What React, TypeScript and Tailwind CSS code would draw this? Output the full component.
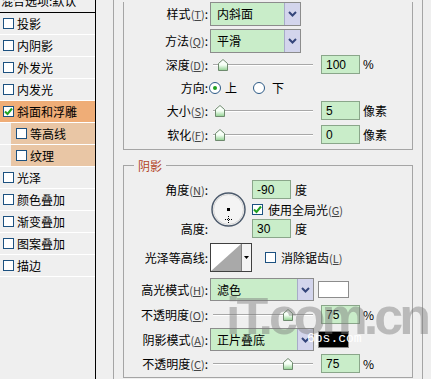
import React from "react";

const font = { fontFamily: '"Noto Sans CJK SC", "Liberation Sans", sans-serif' };

const layers = [
  { t: "投影" },
  { t: "内阴影" },
  { t: "外发光" },
  { t: "内发光" },
  { t: "斜面和浮雕", on: true, checked: true },
  { t: "等高线", sub: true },
  { t: "纹理", sub: true },
  { t: "光泽" },
  { t: "颜色叠加" },
  { t: "渐变叠加" },
  { t: "图案叠加" },
  { t: "描边" },
];

function Box({ checked }: { checked?: boolean }) {
  return (
    <div className="flex h-[11px] w-[11px] shrink-0 items-center justify-center border border-[#1c5180] bg-white">
      {checked && (
        <svg width="9" height="9" viewBox="0 0 9 9">
          <path d="M1 4.5 L3.5 7 L8 1.5" fill="none" stroke="#21a121" strokeWidth="2" />
        </svg>
      )}
    </div>
  );
}

function Lbl({ t, k, w = "w-[84px]" }: { t: string; k?: string; w?: string }) {
  return (
    <div className={`${w} shrink-0 text-right`}>
      {t}
      {k && (
        <span className="text-[11px] text-[#444]">
          (<span className="underline">{k}</span>)
        </span>
      )}
      :
    </div>
  );
}

function Slider({ pos }: { pos: number }) {
  return (
    <div className="relative ml-[3px] h-[14px] w-[100px] shrink-0">
      <div className="absolute left-0 right-0 top-[6px] h-[2px] border-t border-b border-t-[#a8a8a8] border-b-white" />
      <svg className="absolute top-[1px]" style={{ left: pos - 5 }} width="10" height="12" viewBox="0 0 10 12">
        <defs>
          <linearGradient id="thumb" x1="0" y1="0" x2="0" y2="1">
            <stop offset="0" stopColor="#ffffff" />
            <stop offset="0.5" stopColor="#f4fff4" />
            <stop offset="1" stopColor="#8fd08f" />
          </linearGradient>
        </defs>
        <path d="M0.5 11.5 V4.5 L5 0.5 L9.5 4.5 V11.5 Z" fill="url(#thumb)" stroke="#6e8a6e" />
      </svg>
    </div>
  );
}

function Num({ v, cls = "ml-[8px]" }: { v: string; cls?: string }) {
  return (
    <div
      className={`${cls} flex h-[19px] w-[39px] shrink-0 items-center border border-[#8aa68a] bg-[#c9edc9] pl-[4px] text-[12px]`}
      style={{ fontFamily: '"Liberation Sans", sans-serif' }}
    >
      {v}
    </div>
  );
}

function Sel({ t, cls }: { t: string; cls: string }) {
  return (
    <div className={`${cls} ml-[2px] flex shrink-0 border border-[#8c8c8c] bg-[#c9edc9]`}>
      <div className="flex flex-1 items-center pl-[6px]">{t}</div>
      <div className="flex w-[16px] items-center justify-center border-l border-[#a7abc8] bg-[#d3d5ec]">
        <svg width="9" height="6" viewBox="0 0 9 6">
          <path d="M1 1 L4.5 4.5 L8 1" fill="none" stroke="#34457a" strokeWidth="2" />
        </svg>
      </div>
    </div>
  );
}

function Radio({ on }: { on?: boolean }) {
  return (
    <div className="flex h-[12px] w-[12px] shrink-0 items-center justify-center rounded-full border border-[#2c5a86] bg-white">
      {on && <div className="h-[4px] w-[4px] rounded-full bg-[#21a121]" />}
    </div>
  );
}

export default function App() {
  return (
    <div
      className="relative flex h-[379px] w-[431px] overflow-hidden bg-[#efefef] text-[12px] leading-none text-black"
      style={font}
    >
      {/* layer list */}
      <div className="w-[96px] shrink-0 border-r border-black">
        <div className="h-[13px] overflow-hidden border-b border-black">
          <div className="-mt-[7px] whitespace-nowrap pl-[1px] leading-[16px]">混合选项:默认</div>
        </div>
        {layers.map((l) => (
          <div key={l.t} className="h-[22px] border-b border-white">
            <div
              className={`flex h-full items-center gap-[3px] ${
                l.sub ? "ml-[11px] bg-[#e9c6a5] pl-[5px]" : l.on ? "bg-[#efad77] pl-[3px]" : "pl-[3px]"
              }`}
            >
              <Box checked={l.checked} />
              <span>{l.t}</span>
            </div>
          </div>
        ))}
      </div>

      {/* outer group */}
      <div className="ml-[17px] h-full w-[310px] shrink-0 border-l border-r border-[#a5a5a5] px-[9px]">
        {/* structure */}
        <div className="border-b border-l border-r border-[#a5a5a5] pb-[5px]">
          <div className="mt-[2px] flex h-[24px] items-center">
            <Lbl t="样式" k="T" />
            <Sel t="内斜面" cls="h-[24px] w-[91px]" />
          </div>
          <div className="mt-[3px] flex h-[24px] items-center">
            <Lbl t="方法" k="Q" />
            <Sel t="平滑" cls="h-[24px] w-[91px]" />
          </div>
          <div className="mt-[2px] flex h-[19px] items-center">
            <Lbl t="深度" k="D" />
            <div className="w-[2px]" />
            <Slider pos={10} />
            <Num v="100" />
            <span className="ml-[3px]" style={{ fontFamily: '"Liberation Sans", sans-serif' }}>%</span>
          </div>
          <div className="mt-[5px] flex h-[18px] items-center">
            <Lbl t="方向" />
            <div className="ml-[1px]">
              <Radio on />
            </div>
            <span className="ml-[4px]">上</span>
            <div className="ml-[16px]">
              <Radio />
            </div>
            <span className="ml-[7px]">下</span>
          </div>
          <div className="mt-[4px] flex h-[19px] items-center">
            <Lbl t="大小" k="S" />
            <div className="w-[2px]" />
            <Slider pos={7} />
            <Num v="5" />
            <span className="ml-[3px]">像素</span>
          </div>
          <div className="mt-[5px] flex h-[19px] items-center">
            <Lbl t="软化" k="F" />
            <div className="w-[2px]" />
            <Slider pos={7} />
            <Num v="0" />
            <span className="ml-[3px]">像素</span>
          </div>
        </div>

        {/* shadow */}
        <div className="relative mt-[15px] border border-[#a5a5a5] pb-[4px]">
          <div className="absolute -top-[8px] left-[10px] bg-[#efefef] px-[4px] leading-[16px] text-[#b3462a]">阴影</div>
          <div className="mt-[14px] flex">
            <div className="flex w-[84px] flex-col">
              <div className="flex h-[19px] items-center justify-end">
                <Lbl t="角度" k="N" />
              </div>
              <div className="h-[20px]" />
              <div className="flex h-[19px] items-center justify-end">
                <Lbl t="高度" />
              </div>
            </div>
            <div className="w-[44px] pl-[3px] pt-[12px]">
              <svg width="35" height="35" viewBox="0 0 35 35">
                <circle cx="17.5" cy="17.5" r="16.5" fill="#f4f4f4" stroke="#4c5a6c" strokeWidth="1.5" />
                <circle cx="17.5" cy="17.5" r="15" fill="none" stroke="#d6d6d6" strokeWidth="1" />
                <rect x="16" y="16" width="3" height="3" fill="#000" />
                <path d="M17.5 24 V31 M14 27.5 H21" stroke="#000" strokeWidth="1" strokeDasharray="1 1" />
              </svg>
            </div>
            <div className="flex flex-col">
              <div className="flex h-[19px] items-center">
                <Num v="-90" cls="" />
                <span className="ml-[4px]">度</span>
              </div>
              <div className="mt-[5px] flex h-[11px] items-center">
                <Box checked />
                <span className="ml-[5px]">
                  使用全局光<span className="text-[11px] text-[#444]">(<span className="underline">G</span>)</span>
                </span>
              </div>
              <div className="mt-[4px] flex h-[19px] items-center">
                <Num v="30" cls="" />
                <span className="ml-[4px]">度</span>
              </div>
            </div>
          </div>

          <div className="mt-[5px] flex h-[29px] items-center">
            <Lbl t="光泽等高线" />
            <div className="ml-[2px] flex h-[29px] w-[42px] border border-[#404040] bg-white">
              <svg width="30" height="27" viewBox="0 0 30 27">
                <path d="M0 27 L30 0 V27 Z" fill="#a9a9a9" />
              </svg>
              <div className="flex flex-1 items-center justify-center border-l border-[#808080] bg-[#f4f4f4]">
                <svg width="5" height="3" viewBox="0 0 5 3">
                  <path d="M0 0 H5 L2.5 3 Z" fill="#000" />
                </svg>
              </div>
            </div>
            <div className="ml-[13px]">
              <Box />
            </div>
            <span className="ml-[5px]">
              消除锯齿<span className="text-[11px] text-[#444]">(<span className="underline">L</span>)</span>
            </span>
          </div>

          <div className="mt-[6px] flex h-[23px] items-center">
            <Lbl t="高光模式" k="H" />
            <Sel t="滤色" cls="h-[23px] w-[104px]" />
            <div className="ml-[4px] h-[17px] w-[31px] border border-[#8c8c8c] bg-white" />
          </div>
          <div className="mt-[4px] flex h-[19px] items-center">
            <Lbl t="不透明度" k="O" />
            <div className="w-[2px]" />
            <Slider pos={75} />
            <Num v="75" />
            <span className="ml-[3px]">%</span>
          </div>
          <div className="mt-[4px] flex h-[23px] items-center">
            <Lbl t="阴影模式" k="A" />
            <Sel t="正片叠底" cls="h-[23px] w-[104px]" />
            <div className="ml-[4px] h-[17px] w-[31px] border border-[#8c8c8c] bg-black" />
          </div>
          <div className="mt-[3px] flex h-[19px] items-center">
            <Lbl t="不透明度" k="C" />
            <div className="w-[2px]" />
            <Slider pos={75} />
            <Num v="75" />
            <span className="ml-[3px]">%</span>
          </div>
        </div>
      </div>

      {/* watermark */}
      <div
        className="pointer-events-none absolute left-[226px] top-[290px] text-[52px] font-bold leading-none tracking-[-4px] text-[#7a7a7a]/45"
        style={{ fontFamily: '"Liberation Sans", sans-serif' }}
      >
        iT.com.cn
      </div>
      <div
        className="pointer-events-none absolute left-[307px] top-[332px] text-[13px] leading-none text-white"
        style={{ fontFamily: '"Liberation Mono", monospace' }}
      >
        6ps.com
      </div>
    </div>
  );
}
